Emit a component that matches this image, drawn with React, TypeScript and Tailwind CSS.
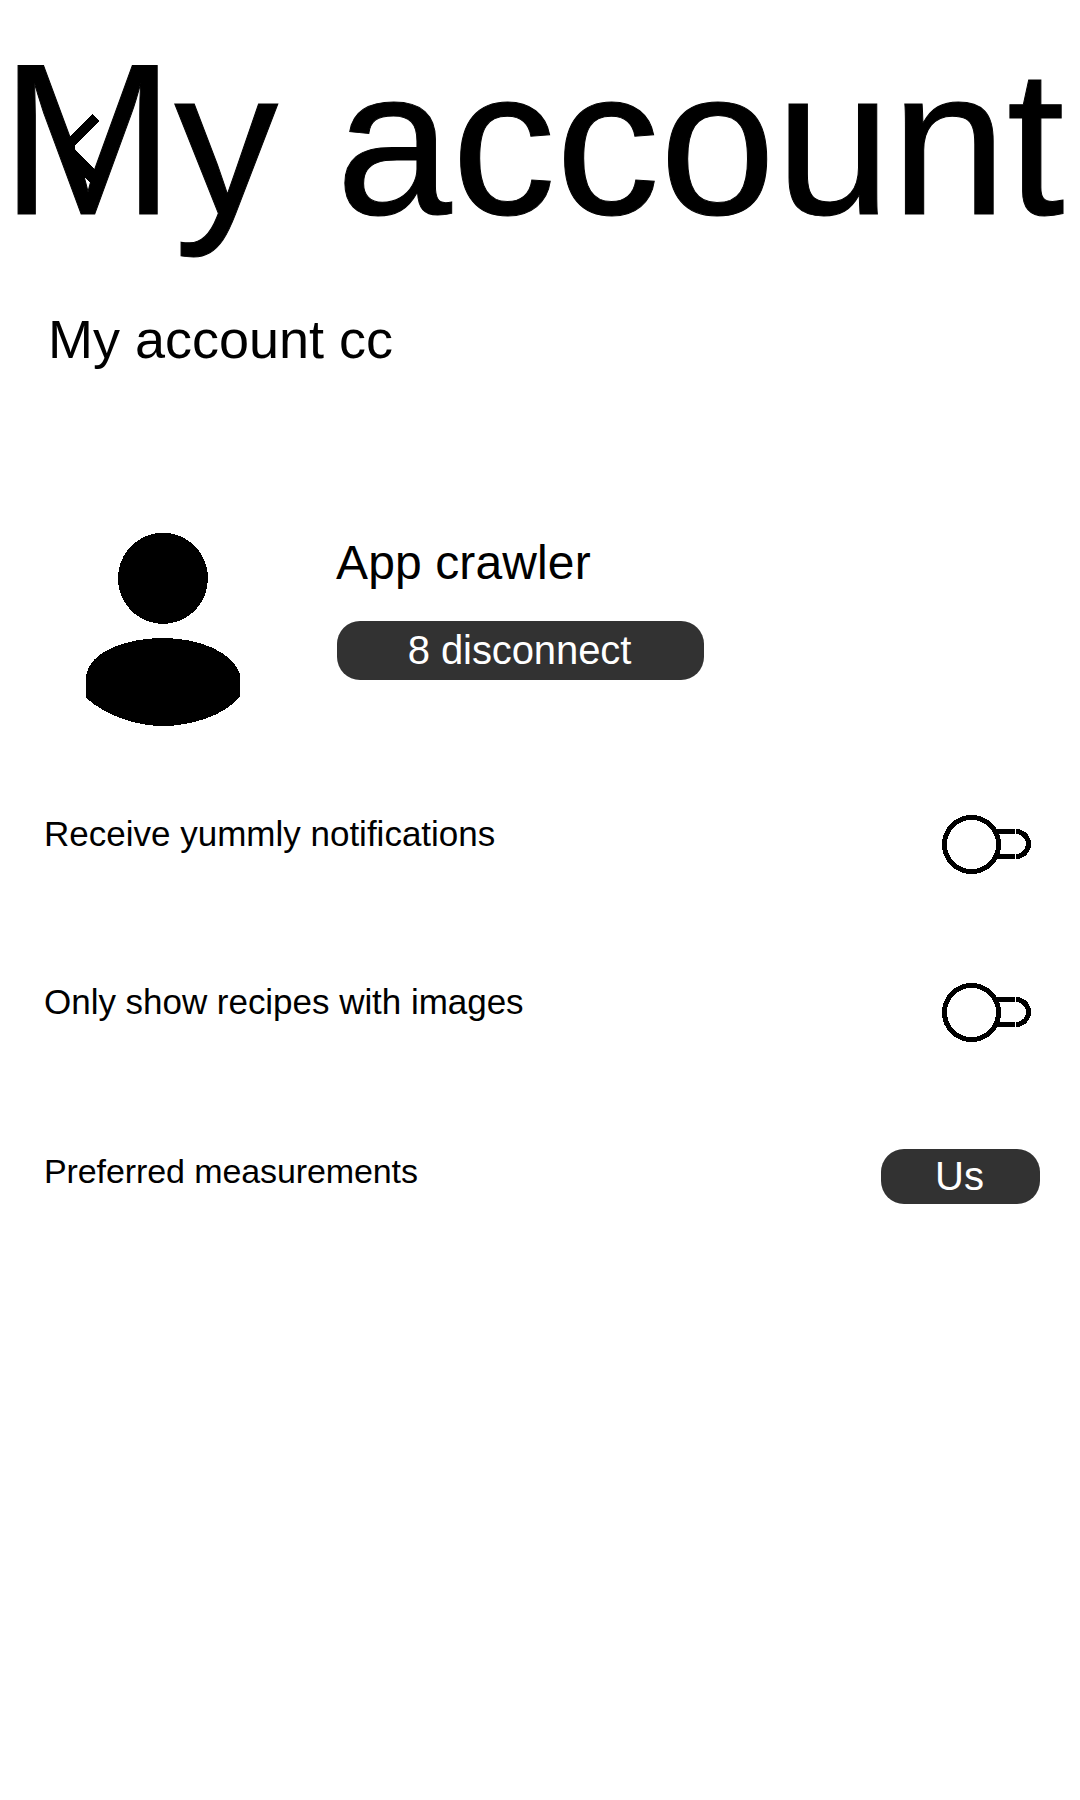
function Toggle() {
  return (
    <svg width="92" height="62" viewBox="0 0 92 62" shapeRendering="crispEdges" fill="none" stroke="#000" strokeWidth="5">
      <path d="M54 17.5H74M54 42.5H74M75 17.5A12.5 12.5 0 0 1 75 42.5" />
      <circle cx="30.5" cy="30.5" r="27" fill="#fff" />
    </svg>
  );
}

function Avatar() {
  return (
    <svg width="156" height="196" viewBox="0 0 156 196" shapeRendering="crispEdges">
      <ellipse cx="78" cy="46.3" rx="45" ry="45.5" />
      <path d="M1 143C5 120 40 106 78 106S148 121 155 142V164C140 184 105 194 78 194S22 184 1 166Z" />
    </svg>
  );
}

export default function App() {
  return (
    <main className="flex h-[1800px] w-[1080px] flex-col overflow-hidden bg-white font-['Liberation_Sans',Arial,sans-serif] text-black">
      <header className="relative h-[285px] pt-[22px] pl-px">
        <h1 className="text-[208px] leading-[240px] whitespace-nowrap [-webkit-text-stroke:1px_black]">
          <span className="inline-block origin-[0_80%] scale-y-[1.035]">M</span>y account
        </h1>
        <svg className="absolute top-[105px] left-[55px]" width="60" height="90" viewBox="0 0 60 90" shapeRendering="crispEdges">
          <path d="M37.5 9L44 16L19.5 41L20 44L43 68L36.3 79L8 52V39Z" />
        </svg>
      </header>
      <h2 className="mt-[24px] pl-[48px] text-[54px] leading-[60px]">My account cc</h2>
      <section className="mt-[163px] flex pl-[85px]">
        <Avatar />
        <div className="ml-[96px] flex flex-col">
          <p className="ml-[-1px] pt-px text-[48px] leading-[60px] tracking-[0.12px]">App crawler</p>
          <button className="mt-[28px] h-[59px] w-[367px] rounded-[23px] bg-[#323232] pr-[2px] text-[40px] leading-[59px] tracking-[-0.1px] text-white">8 disconnect</button>
        </div>
      </section>
      <section className="mt-[86px] flex flex-col pr-[28px] pl-[44px]">
        <div className="flex h-[168px] items-start justify-between pr-[19px]">
          <p className="text-[35px] leading-[40px]">Receive yummly notifications</p>
          <Toggle />
        </div>
        <div className="flex h-[167px] items-start justify-between pr-[19px]">
          <p className="text-[35px] leading-[40px] tracking-[-0.03px]">Only show recipes with images</p>
          <Toggle />
        </div>
        <div className="flex items-start justify-between pr-[12px]">
          <p className="pt-[2px] text-[34px] leading-[40px] tracking-[-0.1px]">Preferred measurements</p>
          <button className="h-[55px] w-[159px] rounded-[23px] bg-[#323232] pr-[2px] text-[40px] leading-[55px] text-white">Us</button>
        </div>
      </section>
    </main>
  );
}
